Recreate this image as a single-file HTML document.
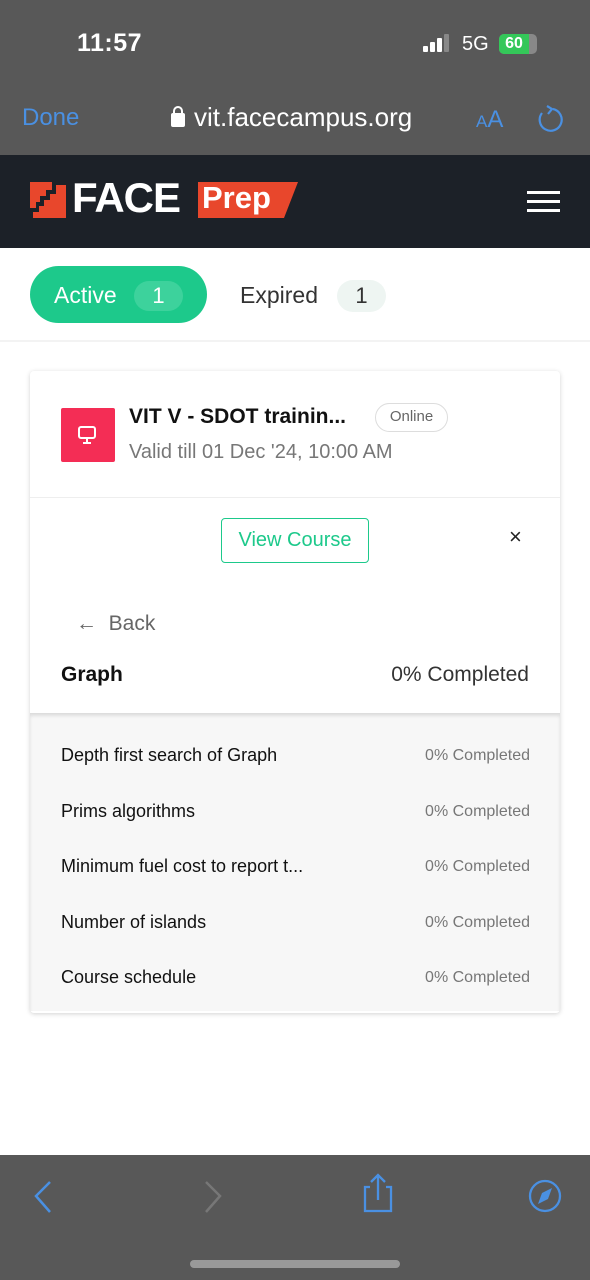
<!DOCTYPE html>
<html><head><meta charset="utf-8"><style>
*{margin:0;padding:0;box-sizing:border-box}
body{width:590px;height:1280px;position:relative;background:#fff;font-family:"Liberation Sans",sans-serif;overflow:hidden}
.a{position:absolute}
.g{background:#585858}
.t{white-space:nowrap}
</style></head><body>
<div class="a g" style="left:0;top:0;width:590px;height:155px"></div>
<div class="a t" style="left:77px;top:29px;color:#fff;font-size:25px;font-weight:bold;letter-spacing:0.5px">11:57</div>
<div class="a" style="left:423px;top:46px;width:5px;height:6px;background:#fff;border-radius:1px"></div>
<div class="a" style="left:430px;top:42px;width:5px;height:10px;background:#fff;border-radius:1px"></div>
<div class="a" style="left:437px;top:38px;width:5px;height:14px;background:#fff;border-radius:1px"></div>
<div class="a" style="left:444px;top:34px;width:5px;height:18px;background:#888;border-radius:1px"></div>
<div class="a t" style="left:462px;top:33px;color:#fff;font-size:20px">5G</div>
<div class="a" style="left:499px;top:34px;width:38px;height:20px;background:#888;border-radius:5px"></div>
<div class="a t" style="left:499px;top:34px;width:30px;height:20px;background:#34c759;border-radius:5px 0 0 5px;color:#fff;font-size:16px;font-weight:bold;text-align:center;line-height:20px">60</div>
<div class="a t" style="left:22px;top:104px;color:#4a90e2;font-size:24px">Done</div>
<div class="a" style="left:171px;top:113px;width:14px;height:14px;background:#fff;border-radius:2px"></div>
<div class="a" style="left:173px;top:106px;width:10px;height:12px;border:2px solid #fff;border-radius:5px 5px 0 0"></div>
<div class="a t" style="left:194px;top:102px;color:#fff;font-size:26px">vit.facecampus.org</div>
<div class="a t" style="left:476px;top:106px;color:#4a90e2;font-size:24px"><span style="font-size:17px">A</span>A</div>
<svg class="a" style="left:535px;top:104px" width="30" height="30" viewBox="0 0 30 30"><path d="M18 5 A11 11 0 1 1 7 9" fill="none" stroke="#4a90e2" stroke-width="2.2"/><path d="M12 2 L17 5 L13 10" fill="none" stroke="#4a90e2" stroke-width="2.2"/></svg>
<div class="a" style="left:0;top:155px;width:590px;height:93px;background:#1c2128"></div>
<svg class="a" style="left:30px;top:182px" width="36" height="36" viewBox="0 0 36 36"><path d="M0 0H22V8H16V14H10V20H6V26H0Z" fill="#e8472c"/><path d="M26 3H36V36H3V30H9V24H14V18H20V12H26Z" fill="#e8472c"/></svg>
<div class="a t" style="left:72px;top:174px;color:#fff;font-size:42px;font-weight:bold;letter-spacing:-1px">FACE</div>
<svg class="a" style="left:198px;top:182px" width="102" height="36"><path d="M0 0H100L86 36H0Z" fill="#e8472c"/></svg>
<div class="a t" style="left:202px;top:180px;color:#fff;font-size:31px;font-weight:bold">Prep</div>
<div class="a" style="left:527px;top:191px;width:33px;height:3px;background:#fff"></div>
<div class="a" style="left:527px;top:200px;width:33px;height:3px;background:#fff"></div>
<div class="a" style="left:527px;top:209px;width:33px;height:3px;background:#fff"></div>
<div class="a" style="left:0;top:340px;width:590px;height:2px;background:#f3f3f3"></div>
<div class="a" style="left:30px;top:266px;width:177px;height:57px;background:#1dc98b;border-radius:29px"></div>
<div class="a t" style="left:54px;top:282px;color:#fff;font-size:23px">Active</div>
<div class="a t" style="left:134px;top:281px;width:49px;height:30px;background:#3dd29c;border-radius:15px;color:#fff;font-size:22px;text-align:center;line-height:30px">1</div>
<div class="a t" style="left:240px;top:282px;color:#333;font-size:23px">Expired</div>
<div class="a t" style="left:337px;top:280px;width:49px;height:32px;background:#eef5f2;border-radius:16px;color:#333;font-size:22px;text-align:center;line-height:32px">1</div>
<div class="a" style="left:30px;top:371px;width:530px;height:642px;background:#fff;border-radius:4px;box-shadow:0 1px 5px rgba(0,0,0,.18)"></div>
<div class="a" style="left:61px;top:408px;width:54px;height:54px;background:#f42d55;border-radius:2px"></div>
<svg class="a" style="left:77px;top:424px" width="22" height="22" viewBox="0 0 22 22"><rect x="2" y="3" width="16" height="11" rx="2" fill="none" stroke="#fff" stroke-width="2"/><path d="M10 14v4M6 19h8" stroke="#fff" stroke-width="2"/></svg>
<div class="a t" style="left:129px;top:405px;color:#111;font-size:21px;font-weight:bold">VIT V - SDOT trainin...</div>
<div class="a t" style="left:375px;top:403px;width:73px;height:29px;border:1.5px solid #ddd;border-radius:15px;color:#666;font-size:15px;text-align:center;line-height:26px">Online</div>
<div class="a t" style="left:129px;top:441px;color:#777;font-size:20px">Valid till 01 Dec '24, 10:00 AM</div>
<div class="a" style="left:30px;top:497px;width:530px;height:1px;background:#eee"></div>
<div class="a t" style="left:221px;top:518px;width:148px;height:45px;border:1.5px solid #1dc98b;border-radius:4px;color:#1dc98b;font-size:20px;text-align:center;line-height:42px">View Course</div>
<div class="a t" style="left:509px;top:524px;color:#222;font-size:22px">×</div>
<div class="a t" style="left:76px;top:612px;color:#666;font-size:21px">← &nbsp;Back</div>
<div class="a t" style="left:61px;top:663px;color:#111;font-size:21px;font-weight:bold">Graph</div>
<div class="a t" style="right:61px;top:663px;color:#333;font-size:21px">0% Completed</div>
<div class="a" style="left:30px;top:713px;width:530px;height:298px;background:#f7f7f7;border-top:1px solid #ddd;box-shadow:inset 0 2px 3px rgba(0,0,0,.1)"></div>
<div class="a" style="left:61px;top:728px;width:469px;color:#111;font-size:18px;line-height:55.5px">
<div style="display:flex;justify-content:space-between"><span>Depth first search of Graph</span><span style="color:#777;font-size:16px">0% Completed</span></div>
<div style="display:flex;justify-content:space-between"><span>Prims algorithms</span><span style="color:#777;font-size:16px">0% Completed</span></div>
<div style="display:flex;justify-content:space-between"><span>Minimum fuel cost to report t...</span><span style="color:#777;font-size:16px">0% Completed</span></div>
<div style="display:flex;justify-content:space-between"><span>Number of islands</span><span style="color:#777;font-size:16px">0% Completed</span></div>
<div style="display:flex;justify-content:space-between"><span>Course schedule</span><span style="color:#777;font-size:16px">0% Completed</span></div>
</div>
<div class="a g" style="left:0;top:1155px;width:590px;height:125px"></div>
<svg class="a" style="left:0;top:1170px" width="590" height="60"><path d="M50 12 L36 26 L50 42" fill="none" stroke="#4a90e2" stroke-width="2.5"/><path d="M206 12 L220 26 L206 42" fill="none" stroke="#777" stroke-width="2.5"/><path d="M370 17h-5v24h26v-24h-5M378 30V6M371 12l7-7 7 7" fill="none" stroke="#4a90e2" stroke-width="2.3"/><circle cx="545" cy="26" r="15" fill="none" stroke="#4a90e2" stroke-width="2.3"/><path d="M552 18 L548 29 L538 34 L542 23Z" fill="#4a90e2"/></svg>
<div class="a" style="left:190px;top:1260px;width:210px;height:8px;background:#999;border-radius:4px"></div>
</body></html>
